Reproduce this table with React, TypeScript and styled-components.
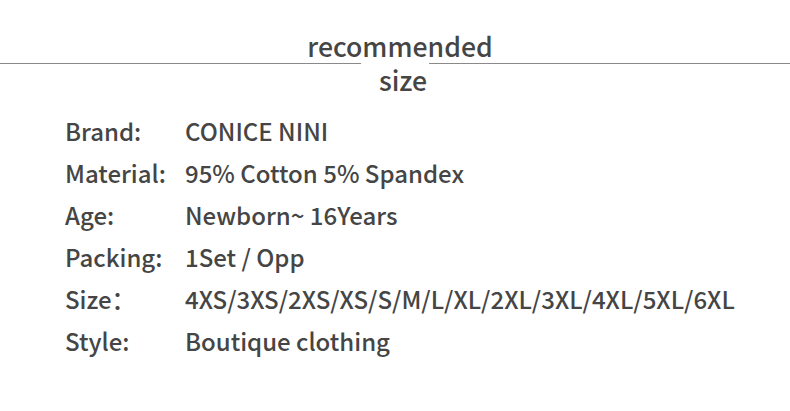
import React from "react";
import styled, { createGlobalStyle } from "styled-components";

const Global = createGlobalStyle`
  html, body { margin: 0; padding: 0; background: #fff; }
  body { font-family: "Noto Sans CJK SC", "Noto Sans", sans-serif; color: #444; }
`;

const Page = styled.div`
  width: 790px;
  height: 411px;
  overflow: hidden;
  background: #fff;
`;

const TitleRow = styled.div`
  display: flex;
  align-items: center;
  padding-top: 29px;
`;

const Rule = styled.div`
  flex: 1;
  height: 1px;
  background: #8a8a8a;
`;

const Title = styled.div`
  width: 68px;
  display: flex;
  justify-content: center;
  font-size: 26.6px;
  font-weight: 500;
  line-height: 34px;
  color: #454545;
`;

const TitleText = styled.div`
  white-space: nowrap;
  display: flex;
  flex-direction: column;
  align-items: center;
  padding-left: 10px;
`;

const TitleLine = styled.span<{ $shift?: number }>`
  padding-left: ${(p) => p.$shift ?? 0}px;
`;

const Specs = styled.div`
  display: grid;
  grid-template-columns: 120px auto;
  grid-auto-rows: 42px;
  align-items: center;
  padding: 12px 0 0 65px;
  font-size: 24px;
  font-weight: 500;
  color: #454545;
`;

const Label = styled.div`
  white-space: nowrap;
`;

const Value = styled.div`
  white-space: nowrap;
`;

const rows: [string, string][] = [
  ["Brand:", "CONICE NINI"],
  ["Material:", "95% Cotton 5% Spandex"],
  ["Age:", "Newborn~ 16Years"],
  ["Packing:", "1Set / Opp"],
  ["Size：", "4XS/3XS/2XS/XS/S/M/L/XL/2XL/3XL/4XL/5XL/6XL"],
  ["Style:", "Boutique clothing"],
];

export default function App() {
  return (
    <Page>
      <Global />
      <TitleRow>
        <Rule />
        <Title>
          <TitleText>
            <TitleLine>recommended</TitleLine>
            <TitleLine $shift={6}>size</TitleLine>
          </TitleText>
        </Title>
        <Rule />
      </TitleRow>
      <Specs>
        {rows.map(([l, v]) => (
          <React.Fragment key={l}>
            <Label>{l}</Label>
            <Value>{v}</Value>
          </React.Fragment>
        ))}
      </Specs>
    </Page>
  );
}
